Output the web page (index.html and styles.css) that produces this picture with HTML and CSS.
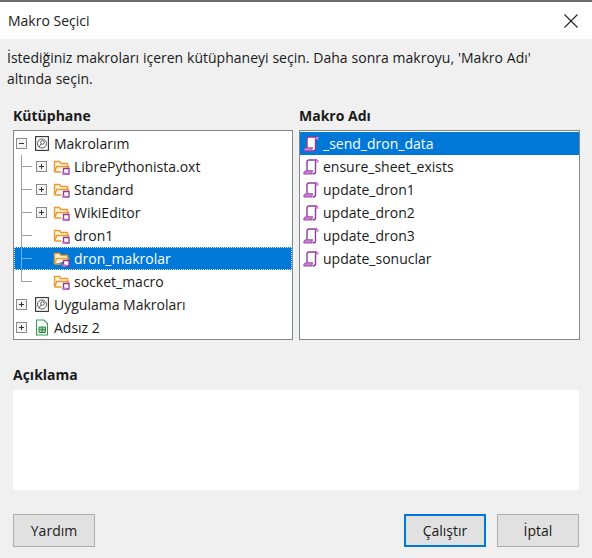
FILE: index.html
```html
<!DOCTYPE html>
<html lang="tr">
    <head>
        <meta charset="utf-8">
        <title>Makro Seçici</title>
        <link rel="stylesheet" href="styles.css">
    </head>
    <body>
        <svg class="defs" width="0" height="0">
            <symbol id="folder" viewBox="0 0 17 16">
                <path d="M1.500 13V2.500h5l1.500 2h6.500v3" fill="#fff3d8" stroke="#e99a30" stroke-width="1.400"/>
                <path d="M1.500 13l2.200-5.500h11.800l-1.500 2.500M1.500 13h7" fill="#fff8e8" stroke="#e99a30" stroke-width="1.400"/>
                <path d="M10.500 9.500h5.500v5.500h-5.500z" fill="#fff" stroke="#8e3a9d" stroke-width="1.300"/>
                <path d="M9 13.500h4.500v2h-4.500z" fill="#c878d2"/>
            </symbol>
            <symbol id="script" viewBox="0 0 16 16">
                <path d="M4 11.500V3c0-1.200.8-2 2-2h8c-.9.300-1.500 1-1.500 2v9.500c0 1.500-.9 2.500-2.500 2.500" fill="#fff" stroke="#8e3a9d" stroke-width="1.400"/>
                <path d="M.8 15c0-2 .8-3.200 2.200-3.200h6.800c-.8.900-1 2-.5 3.200z" fill="#cf83d8" stroke="#8e3a9d" stroke-width=".9"/>
                <path d="M12.800 1h2.700v2.700h-2.700z" fill="#cf83d8"/>
            </symbol>
            <symbol id="library" viewBox="0 0 14 15">
                <rect x=".6" y=".6" width="12.800" height="13.800" fill="#fff" stroke="#333" stroke-width="1.100"/>
                <circle cx="7" cy="7.500" r="4.500" fill="none" stroke="#555"/>
                <circle cx="7.500" cy="6.500" r="1.800" fill="none" stroke="#555"/>
                <path d="M6 8l-2 3" stroke="#555"/>
            </symbol>
            <symbol id="sheet" viewBox="0 0 14 17">
                <path d="M1.500 1h7.500l3.500 3.500v11.500h-11z" fill="#fff" stroke="#3e9a4f" stroke-width="1.100"/>
                <path d="M4 8h6.500v5.500h-6.500z" fill="#a5d8a8" stroke="#2f8a42"/>
                <path d="M4 10.700h6.500M7.200 8v5.500" stroke="#2f8a42"/>
            </symbol>
        </svg>

        <div class="taskbar-edge"></div>

        <header class="titlebar">
            <span>Makro Seçici</span>
            <svg class="close" width="14" height="14" viewBox="0 0 14 14">
                <path d="M.5.500l13 13M13.500.500l-13 13" stroke="#222" stroke-width="1.100"/>
            </svg>
        </header>

        <main class="dialog">
            <p class="intro">İstediğiniz makroları içeren kütüphaneyi seçin. Daha sonra makroyu, 'Makro Adı' altında seçin.</p>

            <div class="columns">
                <section>
                    <h2>Kütüphane</h2>
                    <div class="listbox tree">
                        <div class="row"><span class="expander minus"></span><svg class="icon library"><use href="#library"/></svg><span>Makrolarım</span></div>
                        <div class="row child"><span class="expander plus"></span><svg class="icon folder"><use href="#folder"/></svg><span>LibrePythonista.oxt</span></div>
                        <div class="row child"><span class="expander plus"></span><svg class="icon folder"><use href="#folder"/></svg><span>Standard</span></div>
                        <div class="row child"><span class="expander plus"></span><svg class="icon folder"><use href="#folder"/></svg><span>WikiEditor</span></div>
                        <div class="row child"><span class="expander none"></span><svg class="icon folder"><use href="#folder"/></svg><span>dron1</span></div>
                        <div class="row child selected"><span class="expander none"></span><svg class="icon folder"><use href="#folder"/></svg><span>dron_makrolar</span></div>
                        <div class="row child last"><span class="expander none"></span><svg class="icon folder"><use href="#folder"/></svg><span>socket_macro</span></div>
                        <div class="row"><span class="expander plus"></span><svg class="icon library"><use href="#library"/></svg><span>Uygulama Makroları</span></div>
                        <div class="row"><span class="expander plus"></span><svg class="icon library"><use href="#sheet"/></svg><span>Adsız 2</span></div>
                    </div>
                </section>
                <section>
                    <h2>Makro Adı</h2>
                    <div class="listbox macros">
                        <div class="row selected"><svg class="icon"><use href="#script"/></svg><span>_send_dron_data</span></div>
                        <div class="row"><svg class="icon"><use href="#script"/></svg><span>ensure_sheet_exists</span></div>
                        <div class="row"><svg class="icon"><use href="#script"/></svg><span>update_dron1</span></div>
                        <div class="row"><svg class="icon"><use href="#script"/></svg><span>update_dron2</span></div>
                        <div class="row"><svg class="icon"><use href="#script"/></svg><span>update_dron3</span></div>
                        <div class="row"><svg class="icon"><use href="#script"/></svg><span>update_sonuclar</span></div>
                    </div>
                </section>
            </div>

            <h2 class="desc-label">Açıklama</h2>
            <div class="description"></div>

            <footer class="buttons">
                <button type="button">Yardım</button>
                <span class="spacer"></span>
                <button type="button" class="default">Çalıştır</button>
                <button type="button">İptal</button>
            </footer>
        </main>
    </body>
</html>
```

FILE: styles.css
```css
html, body {
    margin: 0;
    padding: 0;
    height: 558px;
    overflow: hidden;
}

body {
    width: 592px;
    background: #f0f0f0;
    font-family: "Open Sans", "Noto Sans", sans-serif;
    font-size: 14px;
    color: #1a1a1a;
}

.defs {
    position: absolute;
}

.taskbar-edge {
    height: 2px;
    background: #6e6e6e;
}

.titlebar {
    display: flex;
    align-items: center;
    justify-content: space-between;
    height: 37px;
    padding: 0 14px 0 8px;
    background: white;
}

.dialog {
    padding: 0 13px 0 13px;
}

.intro {
    margin: 0 0 0 -6px;
    padding-top: 8px;
    width: 560px;
    line-height: 21px;
    word-spacing: 0.25px;
}

h2 {
    margin: 0;
    font-size: 14px;
    font-weight: 700;
    line-height: 20px;
}

.columns {
    display: grid;
    grid-template-columns: 280px 281px;
    gap: 6px;
    margin-top: 17px;
}

.columns h2 {
    margin-bottom: 4px;
}

.listbox {
    height: 206px;
    padding: 1px 0;
    border: 1px solid #828790;
    background: white;
}

.row {
    position: relative;
    display: flex;
    align-items: center;
    height: 23px;
    white-space: nowrap;
}

.row.selected {
    background: #0078d7;
    color: white;
}

.tree .row {
    padding-left: 2px;
}

.tree .row.selected {
    outline: 1px dotted #d5e8f7;
    outline-offset: -1px;
}

.tree .child {
    padding-left: 22px;
}

.tree .child::before {
    content: "";
    position: absolute;
    left: 7px;
    top: 0;
    bottom: 0;
    width: 10px;
    border-left: 1px solid #a0a0a0;
    background: linear-gradient(#a0a0a0, #a0a0a0) no-repeat 0 11px / 10px 1px;
}

.tree .child.last::before {
    bottom: 11px;
}

.tree .child.selected::before {
    border-left-color: #6aaee6;
    background-image: linear-gradient(#6aaee6, #6aaee6);
}

.expander {
    position: relative;
    box-sizing: border-box;
    flex: none;
    width: 11px;
    height: 11px;
    margin-right: 6px;
    border: 1px solid #8a8a8a;
    background:
        linear-gradient(#333, #333) no-repeat center / 5px 1px,
        #f4f4f4;
}

.expander.plus {
    background:
        linear-gradient(#333, #333) no-repeat center / 5px 1px,
        linear-gradient(#333, #333) no-repeat center / 1px 5px,
        #f4f4f4;
}

.expander.none {
    border: 0;
    background: none;
}

.icon {
    flex: none;
    width: 16px;
    height: 16px;
    margin-right: 5px;
}

.icon.library {
    width: 14px;
    height: 17px;
    margin-right: 5px;
    margin-left: 2px;
}

.icon.folder {
    width: 17px;
    margin-right: 4px;
}

.macros .row {
    padding-left: 3px;
}

.macros .icon {
    margin-right: 4px;
}

.desc-label {
    margin-top: 25px;
    margin-bottom: 5px;
}

.description {
    height: 100px;
    background: white;
}

.buttons {
    display: flex;
    gap: 11px;
    margin-top: 24px;
}

.spacer {
    flex: 1;
}

button {
    box-sizing: border-box;
    width: 82px;
    height: 33px;
    padding: 0;
    border: 1px solid #adadad;
    background: #e1e1e1;
    font: inherit;
    color: inherit;
}

button.default {
    border: 2px solid #0078d7;
}
```
